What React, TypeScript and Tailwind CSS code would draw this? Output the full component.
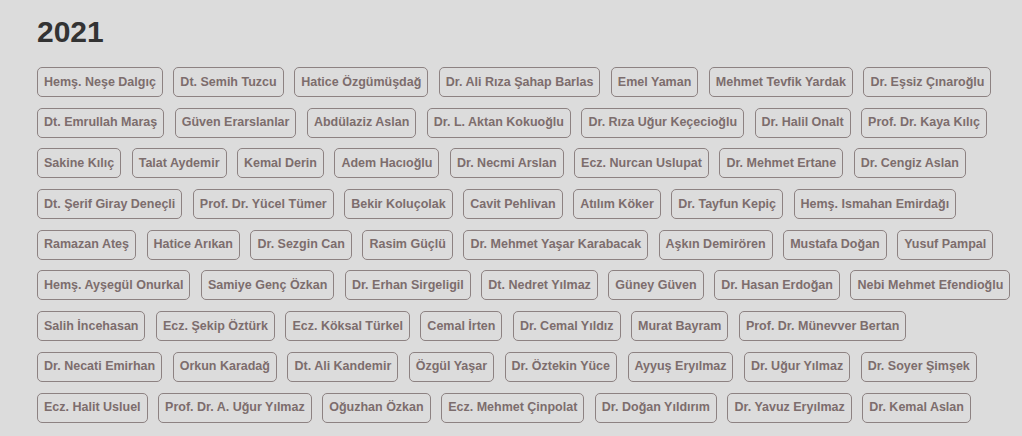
const names = [
  'Hemş. Neşe Dalgıç', 'Dt. Semih Tuzcu', 'Hatice Özgümüşdağ', 'Dr. Ali Rıza Şahap Barlas', 'Emel Yaman', 'Mehmet Tevfik Yardak', 'Dr. Eşsiz Çınaroğlu',
  'Dt. Emrullah Maraş', 'Güven Erarslanlar', 'Abdülaziz Aslan', 'Dr. L. Aktan Kokuoğlu', 'Dr. Rıza Uğur Keçecioğlu', 'Dr. Halil Onalt', 'Prof. Dr. Kaya Kılıç',
  'Sakine Kılıç', 'Talat Aydemir', 'Kemal Derin', 'Adem Hacıoğlu', 'Dr. Necmi Arslan', 'Ecz. Nurcan Uslupat', 'Dr. Mehmet Ertane', 'Dr. Cengiz Aslan',
  'Dt. Şerif Giray Deneçli', 'Prof. Dr. Yücel Tümer', 'Bekir Koluçolak', 'Cavit Pehlivan', 'Atılım Köker', 'Dr. Tayfun Kepiç', 'Hemş. Ismahan Emirdağı',
  'Ramazan Ateş', 'Hatice Arıkan', 'Dr. Sezgin Can', 'Rasim Güçlü', 'Dr. Mehmet Yaşar Karabacak', 'Aşkın Demirören', 'Mustafa Doğan', 'Yusuf Pampal',
  'Hemş. Ayşegül Onurkal', 'Samiye Genç Özkan', 'Dr. Erhan Sirgeligil', 'Dt. Nedret Yılmaz', 'Güney Güven', 'Dr. Hasan Erdoğan', 'Nebi Mehmet Efendioğlu',
  'Salih İncehasan', 'Ecz. Şekip Öztürk', 'Ecz. Köksal Türkel', 'Cemal İrten', 'Dr. Cemal Yıldız', 'Murat Bayram', 'Prof. Dr. Münevver Bertan',
  'Dr. Necati Emirhan', 'Orkun Karadağ', 'Dt. Ali Kandemir', 'Özgül Yaşar', 'Dr. Öztekin Yüce', 'Ayyuş Eryılmaz', 'Dr. Uğur Yılmaz', 'Dr. Soyer Şimşek',
  'Ecz. Halit Usluel', 'Prof. Dr. A. Uğur Yılmaz', 'Oğuzhan Özkan', 'Ecz. Mehmet Çinpolat', 'Dr. Doğan Yıldırım', 'Dr. Yavuz Eryılmaz', 'Dr. Kemal Aslan',
];

export default function App() {
  return (
    <div className="min-h-[436px] bg-[#dcdcdc] pl-[37px] pr-[10px] pt-[14px] font-['Liberation_Sans',Arial,sans-serif]">
      <h1 className="text-[30px] font-bold leading-[36px] text-[#333333]">2021</h1>
      <div className="mt-[17px] flex flex-wrap gap-x-[10.5px] gap-y-[10.7px]">
        {names.map((n) => (
          <span
            key={n}
            className="flex h-[30px] items-center rounded-[5px] border border-[#8d8282] px-[6px] text-[12.5px] font-bold whitespace-nowrap text-[#7c6d6d]"
          >
            {n}
          </span>
        ))}
      </div>
    </div>
  );
}
